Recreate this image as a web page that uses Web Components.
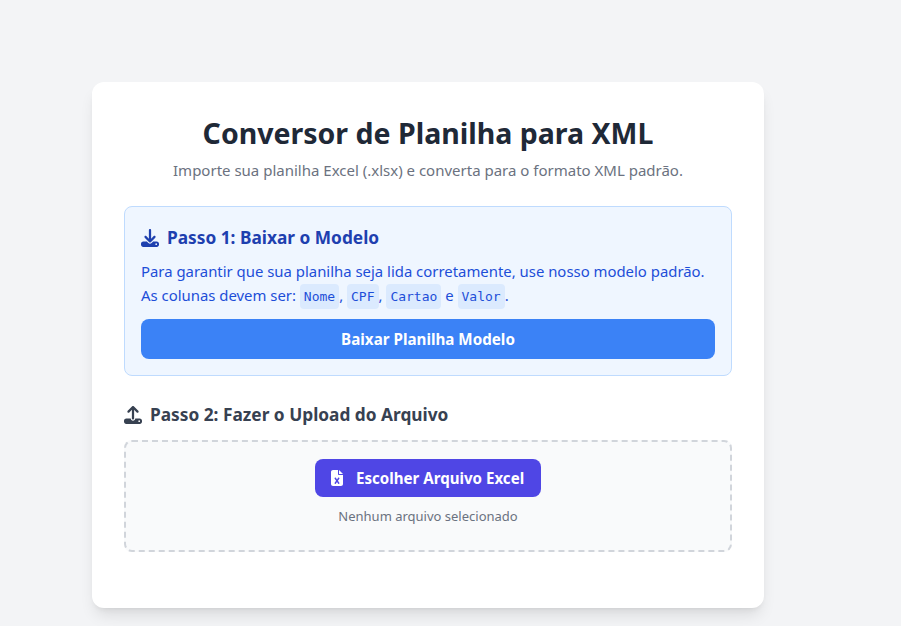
<!DOCTYPE html>
<html lang="pt-BR">
<head>
<meta charset="utf-8">
<title>Conversor de Planilha para XML</title>
<style>
  html, body { margin: 0; height: 100%; overflow: hidden; }
  body {
    background: #f3f4f6;
    font-family: "Noto Sans", sans-serif;
    line-height: 24px;
    padding: 82px 0 0 92px;
    box-sizing: border-box;
  }
</style>
</head>
<body>
<converter-card>
  <span slot="title">Conversor de Planilha para XML</span>
  <span slot="subtitle">Importe sua planilha Excel (.xlsx) e converta para o formato XML padrão.</span>
  <step-info>
    <span slot="heading">Passo 1: Baixar o Modelo</span>
    <div>Para garantir que sua planilha seja lida corretamente, use nosso modelo padrão.</div>
    <div><span>As colunas devem ser:</span> <col-tag>Nome</col-tag><span>,</span> <col-tag>CPF</col-tag><span>,</span> <col-tag>Cartao</col-tag> <span>e</span> <col-tag>Valor</col-tag><span>.</span></div>
    <span slot="action">Baixar Planilha Modelo</span>
  </step-info>
  <upload-step>
    <span slot="heading">Passo 2: Fazer o Upload do Arquivo</span>
    <span slot="button">Escolher Arquivo Excel</span>
    <span slot="status">Nenhum arquivo selecionado</span>
  </upload-step>
</converter-card>

<script>
  (function app(customElements) {
    const ICONS = {
      download: ['0 0 512 512', 'M288 32c0-17.7-14.3-32-32-32s-32 14.3-32 32V274.7l-73.4-73.4c-12.5-12.5-32.8-12.5-45.3 0s-12.5 32.8 0 45.3l128 128c12.5 12.5 32.8 12.5 45.3 0l128-128c12.5-12.5 12.5-32.8 0-45.3s-32.8-12.5-45.3 0L288 274.7V32zM64 352c-35.3 0-64 28.7-64 64v32c0 35.3 28.7 64 64 64H448c35.3 0 64-28.7 64-64V416c0-35.3-28.7-64-64-64H346.5l-45.3 45.3c-25 25-65.5 25-90.5 0L165.5 352H64zm368 56a24 24 0 1 1 0 48 24 24 0 1 1 0-48z'],
      upload: ['0 0 512 512', 'M288 109.3V352c0 17.7-14.3 32-32 32s-32-14.3-32-32V109.3l-73.4 73.4c-12.5 12.5-32.8 12.5-45.3 0s-12.5-32.8 0-45.3l128-128c12.5-12.5 32.8-12.5 45.3 0l128 128c12.5 12.5 12.5 32.8 0 45.3s-32.8 12.5-45.3 0L288 109.3zM64 352H192c0 35.3 28.7 64 64 64s64-28.7 64-64H448c35.3 0 64 28.7 64 64v32c0 35.3-28.7 64-64 64H64c-35.3 0-64-28.7-64-64V416c0-35.3 28.7-64 64-64zM432 456a24 24 0 1 0 0-48 24 24 0 1 0 0 48z'],
      excel: ['0 0 384 512', 'M64 0C28.7 0 0 28.7 0 64V448c0 35.3 28.7 64 64 64H320c35.3 0 64-28.7 64-64V160H256c-17.7 0-32-14.3-32-32V0H64zM256 0V128H384L256 0zM155.7 250.2L192 302.1l36.3-51.9c7.6-10.9 22.6-13.5 33.4-5.9s13.5 22.6 5.9 33.4L221.3 344l46.4 66.2c7.6 10.9 5 25.8-5.9 33.4s-25.8 5-33.4-5.9L192 385.8l-36.3 51.9c-7.6 10.9-22.6 13.5-33.4 5.9s-13.5-22.6-5.9-33.4L162.7 344l-46.4-66.2c-7.6-10.9-5-25.8 5.9-33.4s25.8-5 33.4 5.9z']
    };

    function icon(name, height) {
      const [box, d] = ICONS[name];
      return `<svg viewBox="${box}" height="${height}" fill="currentColor" aria-hidden="true"><path d="${d}"/></svg>`;
    }

    class ConverterCard extends HTMLElement {
      constructor() {
        super();
        const shadowRoot = this.attachShadow({mode: 'open'});
        shadowRoot.innerHTML = `
          <style>
            :host {
              display: block;
              width: 672px;
              height: 526px;
              box-sizing: border-box;
              padding: 32px;
              background: #fff;
              border-radius: 12px;
              box-shadow: 0 10px 15px -3px rgba(0,0,0,.1), 0 4px 6px -4px rgba(0,0,0,.1);
            }
            h1 {
              margin: 0 0 6px;
              font-size: 28.5px;
              line-height: 38px;
              font-weight: 700;
              color: #1f2937;
              text-align: center;
            }
            p {
              margin: 0 0 24px;
              font-size: 15px;
              color: #6b7280;
              text-align: center;
            }
          </style>
          <h1><slot name="title"></slot></h1>
          <p><slot name="subtitle"></slot></p>
          <slot></slot>
        `;
      }
    }

    class StepInfo extends HTMLElement {
      constructor() {
        super();
        const shadowRoot = this.attachShadow({mode: 'open'});
        shadowRoot.innerHTML = `
          <style>
            :host {
              display: block;
              padding: 16px;
              margin-bottom: 24px;
              background: #eff6ff;
              border: 1px solid #bfdbfe;
              border-radius: 8px;
            }
            h2 {
              display: flex;
              align-items: center;
              gap: 8px;
              margin: 0 0 7px;
              padding-top: 1px;
              font-size: 17.3px;
              line-height: 28px;
              font-weight: 700;
              color: #1e40af;
            }
            .text { color: #1d4ed8; font-size: 14.9px; line-height: 24px; }
            .cards__action {
              display: flex;
              align-items: center;
              justify-content: center;
              height: 40px;
              margin-top: 12px;
              background: #3b82f6;
              color: #fff;
              font-weight: 700;
              font-size: 15.2px;
              border-radius: 8px;
            }
          </style>
          <h2>${icon('download', 18)}<slot name="heading"></slot></h2>
          <div class="text"><slot></slot></div>
          <div class="cards__action"><slot name="action"></slot></div>
        `;
      }
    }

    class ColTag extends HTMLElement {
      constructor() {
        super();
        const shadowRoot = this.attachShadow({mode: 'open'});
        shadowRoot.innerHTML = `<style>
            :host {
              display: inline;
              font-family: "DejaVu Sans Mono", monospace;
              font-size: 13px;
              line-height: 16px;
              padding: 5px 4px;
              background: #dbeafe;
              border-radius: 4px;
            }
          </style><slot></slot>`;
      }
    }

    class UploadStep extends HTMLElement {
      constructor() {
        super();
        const shadowRoot = this.attachShadow({mode: 'open'});
        shadowRoot.innerHTML = `
          <style>
            :host { display: block; }
            h2 {
              display: flex;
              align-items: center;
              gap: 8px;
              margin: 0 0 11px;
              padding-top: 1px;
              font-size: 17.3px;
              line-height: 28px;
              font-weight: 700;
              color: #374151;
            }
            .zone {
              display: flex;
              flex-direction: column;
              align-items: center;
              height: 112px;
              box-sizing: border-box;
              padding-top: 17px;
              background: #f9fafb;
              border: 2px dashed #d1d5db;
              border-radius: 8px;
            }
            .pick {
              display: flex;
              align-items: center;
              gap: 13px;
              width: 226px;
              box-sizing: border-box;
              height: 38px;
              padding: 0 0 0 16px;
              background: #4f46e5;
              color: #fff;
              font-weight: 700;
              font-size: 15.1px;
              border-radius: 8px;
            }
            .status {
              margin-top: 8px;
              font-size: 13px;
              line-height: 22px;
              color: #6b7280;
            }
          </style>
          <h2>${icon('upload', 18)}<slot name="heading"></slot></h2>
          <div class="zone">
            <div class="pick">${icon('excel', 16)}<slot name="button"></slot></div>
            <div class="status"><slot name="status"></slot></div>
          </div>
        `;
      }
    }

    customElements.define('converter-card', ConverterCard);
    customElements.define('step-info', StepInfo);
    customElements.define('col-tag', ColTag);
    customElements.define('upload-step', UploadStep);
  })(window.customElements);
</script>
</body>
</html>
